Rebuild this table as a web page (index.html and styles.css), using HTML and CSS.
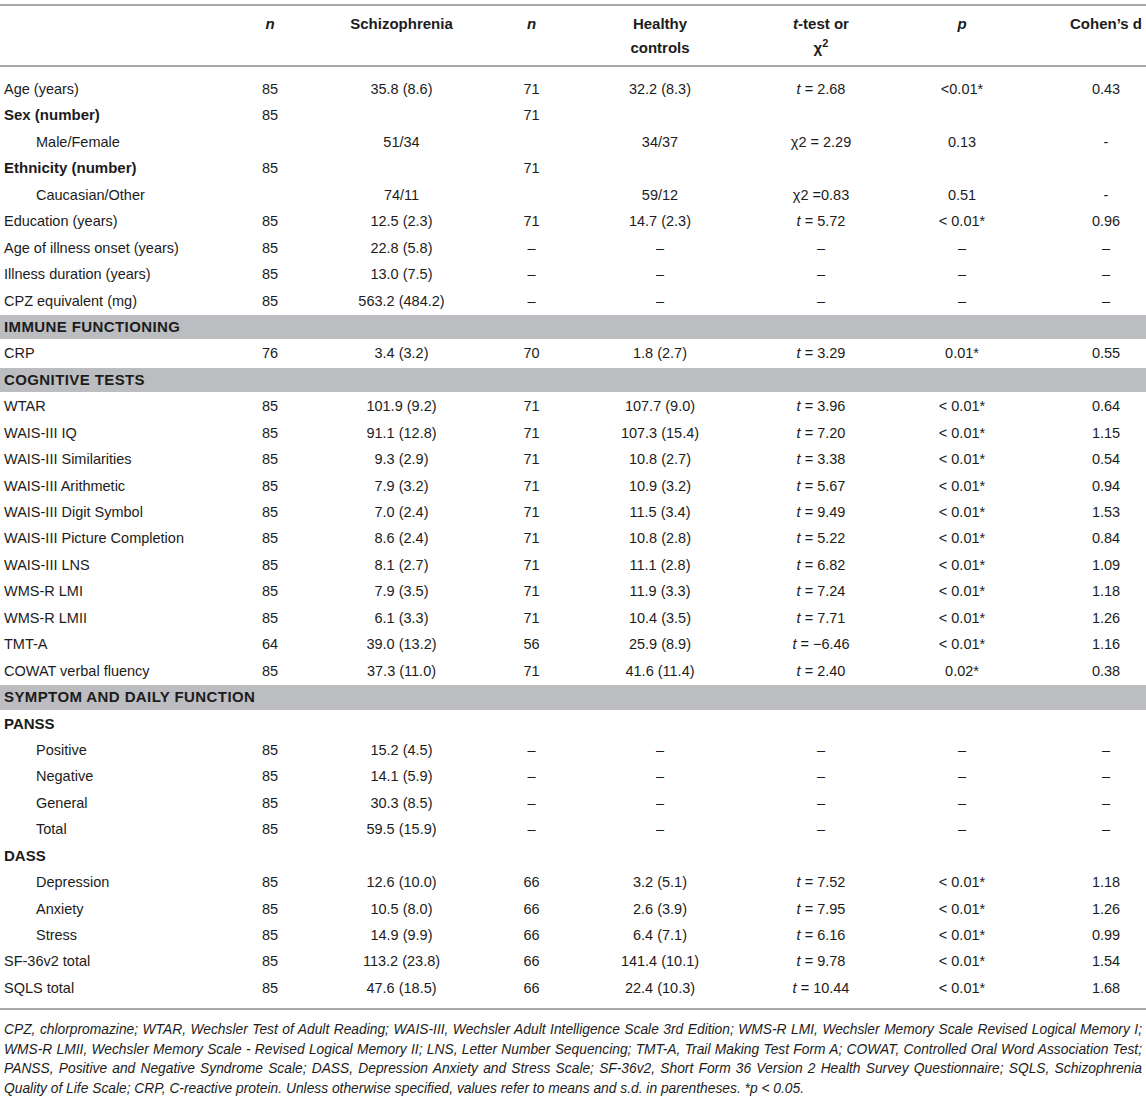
FILE: index.html
```html
<!DOCTYPE html>
<html>
    <head>
        <meta charset="utf-8">
        <title>Sample characteristics</title>
        <link rel="stylesheet" href="styles.css">
    </head>
    <body>
        <table class="stats-table">
            <colgroup>
                <col class="col-label">
                <col class="col-n">
                <col class="col-sz">
                <col class="col-n2">
                <col class="col-hc">
                <col class="col-t">
                <col class="col-p">
                <col class="col-d">
            </colgroup>
            <thead>
                <tr>
                    <th class="label"></th>
                    <th><i>n</i></th>
                    <th>Schizophrenia</th>
                    <th><i>n</i></th>
                    <th>Healthy<br>controls</th>
                    <th><i>t</i>-test or<br>χ<sup>2</sup></th>
                    <th><i>p</i></th>
                    <th class="d">Cohen’s d</th>
                </tr>
            </thead>
            <tbody>
                <tr class="first-row"><td class="label">Age (years)</td><td>85</td><td>35.8 (8.6)</td><td>71</td><td>32.2 (8.3)</td><td><i>t</i> = 2.68</td><td>&lt;0.01*</td><td class="d">0.43</td></tr>
                <tr><td class="label group">Sex (number)</td><td>85</td><td></td><td>71</td><td></td><td></td><td></td><td class="d"></td></tr>
                <tr><td class="label sub">Male/Female</td><td></td><td>51/34</td><td></td><td>34/37</td><td>χ2 = 2.29</td><td>0.13</td><td class="d">-</td></tr>
                <tr><td class="label group">Ethnicity (number)</td><td>85</td><td></td><td>71</td><td></td><td></td><td></td><td class="d"></td></tr>
                <tr><td class="label sub">Caucasian/Other</td><td></td><td>74/11</td><td></td><td>59/12</td><td>χ2 =0.83</td><td>0.51</td><td class="d">-</td></tr>
                <tr><td class="label">Education (years)</td><td>85</td><td>12.5 (2.3)</td><td>71</td><td>14.7 (2.3)</td><td><i>t</i> = 5.72</td><td>&lt; 0.01*</td><td class="d">0.96</td></tr>
                <tr><td class="label">Age of illness onset (years)</td><td>85</td><td>22.8 (5.8)</td><td>–</td><td>–</td><td>–</td><td>–</td><td class="d">–</td></tr>
                <tr><td class="label">Illness duration (years)</td><td>85</td><td>13.0 (7.5)</td><td>–</td><td>–</td><td>–</td><td>–</td><td class="d">–</td></tr>
                <tr><td class="label">CPZ equivalent (mg)</td><td>85</td><td>563.2 (484.2)</td><td>–</td><td>–</td><td>–</td><td>–</td><td class="d">–</td></tr>
                <tr class="band"><td colspan="8">IMMUNE FUNCTIONING</td></tr>
                <tr><td class="label">CRP</td><td>76</td><td>3.4 (3.2)</td><td>70</td><td>1.8 (2.7)</td><td><i>t</i> = 3.29</td><td>0.01*</td><td class="d">0.55</td></tr>
                <tr class="band"><td colspan="8">COGNITIVE TESTS</td></tr>
                <tr><td class="label">WTAR</td><td>85</td><td>101.9 (9.2)</td><td>71</td><td>107.7 (9.0)</td><td><i>t</i> = 3.96</td><td>&lt; 0.01*</td><td class="d">0.64</td></tr>
                <tr><td class="label">WAIS-III IQ</td><td>85</td><td>91.1 (12.8)</td><td>71</td><td>107.3 (15.4)</td><td><i>t</i> = 7.20</td><td>&lt; 0.01*</td><td class="d">1.15</td></tr>
                <tr><td class="label">WAIS-III Similarities</td><td>85</td><td>9.3 (2.9)</td><td>71</td><td>10.8 (2.7)</td><td><i>t</i> = 3.38</td><td>&lt; 0.01*</td><td class="d">0.54</td></tr>
                <tr><td class="label">WAIS-III Arithmetic</td><td>85</td><td>7.9 (3.2)</td><td>71</td><td>10.9 (3.2)</td><td><i>t</i> = 5.67</td><td>&lt; 0.01*</td><td class="d">0.94</td></tr>
                <tr><td class="label">WAIS-III Digit Symbol</td><td>85</td><td>7.0 (2.4)</td><td>71</td><td>11.5 (3.4)</td><td><i>t</i> = 9.49</td><td>&lt; 0.01*</td><td class="d">1.53</td></tr>
                <tr><td class="label">WAIS-III Picture Completion</td><td>85</td><td>8.6 (2.4)</td><td>71</td><td>10.8 (2.8)</td><td><i>t</i> = 5.22</td><td>&lt; 0.01*</td><td class="d">0.84</td></tr>
                <tr><td class="label">WAIS-III LNS</td><td>85</td><td>8.1 (2.7)</td><td>71</td><td>11.1 (2.8)</td><td><i>t</i> = 6.82</td><td>&lt; 0.01*</td><td class="d">1.09</td></tr>
                <tr><td class="label">WMS-R LMI</td><td>85</td><td>7.9 (3.5)</td><td>71</td><td>11.9 (3.3)</td><td><i>t</i> = 7.24</td><td>&lt; 0.01*</td><td class="d">1.18</td></tr>
                <tr><td class="label">WMS-R LMII</td><td>85</td><td>6.1 (3.3)</td><td>71</td><td>10.4 (3.5)</td><td><i>t</i> = 7.71</td><td>&lt; 0.01*</td><td class="d">1.26</td></tr>
                <tr><td class="label">TMT-A</td><td>64</td><td>39.0 (13.2)</td><td>56</td><td>25.9 (8.9)</td><td><i>t</i> = −6.46</td><td>&lt; 0.01*</td><td class="d">1.16</td></tr>
                <tr><td class="label">COWAT verbal fluency</td><td>85</td><td>37.3 (11.0)</td><td>71</td><td>41.6 (11.4)</td><td><i>t</i> = 2.40</td><td>0.02*</td><td class="d">0.38</td></tr>
                <tr class="band"><td colspan="8">SYMPTOM AND DAILY FUNCTION</td></tr>
                <tr><td class="label group">PANSS</td><td></td><td></td><td></td><td></td><td></td><td></td><td class="d"></td></tr>
                <tr><td class="label sub">Positive</td><td>85</td><td>15.2 (4.5)</td><td>–</td><td>–</td><td>–</td><td>–</td><td class="d">–</td></tr>
                <tr><td class="label sub">Negative</td><td>85</td><td>14.1 (5.9)</td><td>–</td><td>–</td><td>–</td><td>–</td><td class="d">–</td></tr>
                <tr><td class="label sub">General</td><td>85</td><td>30.3 (8.5)</td><td>–</td><td>–</td><td>–</td><td>–</td><td class="d">–</td></tr>
                <tr><td class="label sub">Total</td><td>85</td><td>59.5 (15.9)</td><td>–</td><td>–</td><td>–</td><td>–</td><td class="d">–</td></tr>
                <tr><td class="label group">DASS</td><td></td><td></td><td></td><td></td><td></td><td></td><td class="d"></td></tr>
                <tr><td class="label sub">Depression</td><td>85</td><td>12.6 (10.0)</td><td>66</td><td>3.2 (5.1)</td><td><i>t</i> = 7.52</td><td>&lt; 0.01*</td><td class="d">1.18</td></tr>
                <tr><td class="label sub">Anxiety</td><td>85</td><td>10.5 (8.0)</td><td>66</td><td>2.6 (3.9)</td><td><i>t</i> = 7.95</td><td>&lt; 0.01*</td><td class="d">1.26</td></tr>
                <tr><td class="label sub">Stress</td><td>85</td><td>14.9 (9.9)</td><td>66</td><td>6.4 (7.1)</td><td><i>t</i> = 6.16</td><td>&lt; 0.01*</td><td class="d">0.99</td></tr>
                <tr><td class="label">SF-36v2 total</td><td>85</td><td>113.2 (23.8)</td><td>66</td><td>141.4 (10.1)</td><td><i>t</i> = 9.78</td><td>&lt; 0.01*</td><td class="d">1.54</td></tr>
                <tr class="last-row"><td class="label">SQLS total</td><td>85</td><td>47.6 (18.5)</td><td>66</td><td>22.4 (10.3)</td><td><i>t</i> = 10.44</td><td>&lt; 0.01*</td><td class="d">1.68</td></tr>
            </tbody>
        </table>
        <div class="notes">
            <div class="note-line">CPZ, chlorpromazine; WTAR, Wechsler Test of Adult Reading; WAIS-III, Wechsler Adult Intelligence Scale 3rd Edition; WMS-R LMI, Wechsler Memory Scale Revised Logical Memory I;</div>
            <div class="note-line">WMS-R LMII, Wechsler Memory Scale - Revised Logical Memory II; LNS, Letter Number Sequencing; TMT-A, Trail Making Test Form A; COWAT, Controlled Oral Word Association Test;</div>
            <div class="note-line">PANSS, Positive and Negative Syndrome Scale; DASS, Depression Anxiety and Stress Scale; SF-36v2, Short Form 36 Version 2 Health Survey Questionnaire; SQLS, Schizophrenia</div>
            <div class="note-line note-last">Quality of Life Scale; CRP, C-reactive protein. Unless otherwise specified, values refer to means and s.d. in parentheses. *p &lt; 0.05.</div>
        </div>
    </body>
</html>
```

FILE: styles.css
```css
*{
    box-sizing: border-box;
}
body{
    margin: 0;
    background: #fff;
    color: #1c1c1c;
    font-family: "Liberation Sans", Arial, sans-serif;
}
.stats-table{
    width: 1146px;
    margin-top: 4px;
    table-layout: fixed;
    border-collapse: separate;
    border-spacing: 0;
    font-size: 14.5px;
}
.col-label{ width: 204px; }
.col-n{ width: 132px; }
.col-sz{ width: 131px; }
.col-n2{ width: 129px; }
.col-hc{ width: 128px; }
.col-t{ width: 194px; }
.col-p{ width: 88px; }
.col-d{ width: 140px; }

th{
    font-size: 15px;
    font-weight: bold;
    line-height: 24px;
    height: 63px;
    padding: 6px 4px 0;
    vertical-align: top;
    text-align: center;
    border-top: 2px solid #a8a8a8;
    border-bottom: 2px solid #a8a8a8;
}
th sup{
    font-size: 11px;
    line-height: 0;
}
td{
    height: 26.44px;
    line-height: 26.44px;
    padding: 0 4px;
    text-align: center;
    white-space: nowrap;
}
.label{
    text-align: left;
}
.group{
    font-weight: bold;
    font-size: 15px;
}
.sub{
    padding-left: 36px;
}
.d{
    padding-left: 60px;
    padding-right: 0;
}
.first-row td{
    height: 35.44px;
    padding-top: 9px;
}
.last-row td{
    height: 33.44px;
    padding-bottom: 7px;
    border-bottom: 2px solid #a8a8a8;
}
.band td{
    background: #bcbdc0;
    text-align: left;
    font-weight: bold;
    font-size: 15px;
    letter-spacing: 0.4px;
    box-shadow: inset 0 1px 0 #fff, inset 0 -1px 0 #fff;
}
.notes{
    margin-top: 10px;
    padding: 0 4px;
    font-size: 13.8px;
    font-style: italic;
    line-height: 19.5px;
}
.note-line{
    text-align: justify;
    text-align-last: justify;
    white-space: nowrap;
}
.note-last{
    text-align-last: left;
}
```
